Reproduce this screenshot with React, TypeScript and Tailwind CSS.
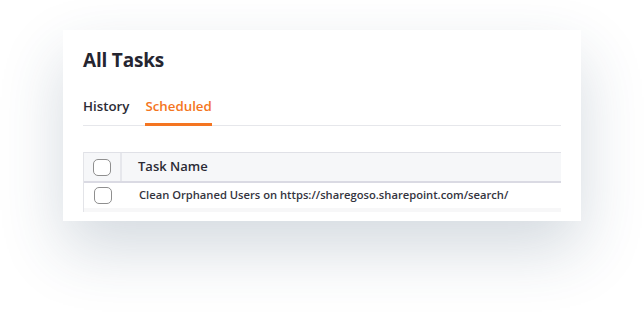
import { useState } from "react";

const font = { fontFamily: '"Open Sans", "Noto Sans", sans-serif' };

function Checkbox() {
  return (
    <div className="w-[18px] h-[17px] rounded-[5px] border border-[#8f8f8f] bg-white" />
  );
}

export default function App() {
  const [tab, setTab] = useState("Scheduled");
  const tabs = ["History", "Scheduled"];

  return (
    <div className="w-[644px] h-[316px] bg-white pt-[30px] pl-[63px]" style={font}>
      <div className="w-[518px] h-[191px] bg-white px-5 pt-4 pb-[9px] flex flex-col shadow-[0_28px_60px_rgba(40,70,100,0.2)]">
        <h1 className="text-[19px] leading-7 font-bold text-[#252530] tracking-[-0.2px]">
          All Tasks
        </h1>

        {/* Tabs */}
        <div className="mt-[22px] flex gap-4 border-b border-[#e6e7eb]">
          {tabs.map((t) => (
            <button
              key={t}
              onClick={() => setTab(t)}
              className={`-mb-px pb-[7px] border-b-[3px] text-[13.3px] leading-5 font-semibold ${
                tab === t
                  ? "border-[#f47521] text-[#f47521]"
                  : "border-transparent text-[#2b2b35]"
              }`}
            >
              {t}
            </button>
          ))}
        </div>

        {/* Table */}
        <div className="mt-[26px] h-[60px] overflow-hidden border-l border-[#e3e4e8]">
          <div className="flex h-[31px] bg-[#f6f7f9] border-t border-[#e0e1e7] border-b-2 border-b-[#dadae3]">
            <div className="w-[38px] flex items-center justify-center border-r-2 border-[#e6e7ec]">
              <Checkbox />
            </div>
            <div className="flex items-center pl-4 text-[13px] font-semibold text-[#2b2b35]">
              Task Name
            </div>
          </div>
          <div className="flex h-[25px]">
            <div className="w-[38px] flex items-center justify-center">
              <Checkbox />
            </div>
            <div className="flex items-center pl-[17px] text-[11.2px] font-semibold text-[#34343e]">
              Clean Orphaned Users on https://sharegoso.sharepoint.com/search/
            </div>
          </div>
          <div className="h-[4px] bg-[#f7f7f8]" />
        </div>
      </div>
    </div>
  );
}
